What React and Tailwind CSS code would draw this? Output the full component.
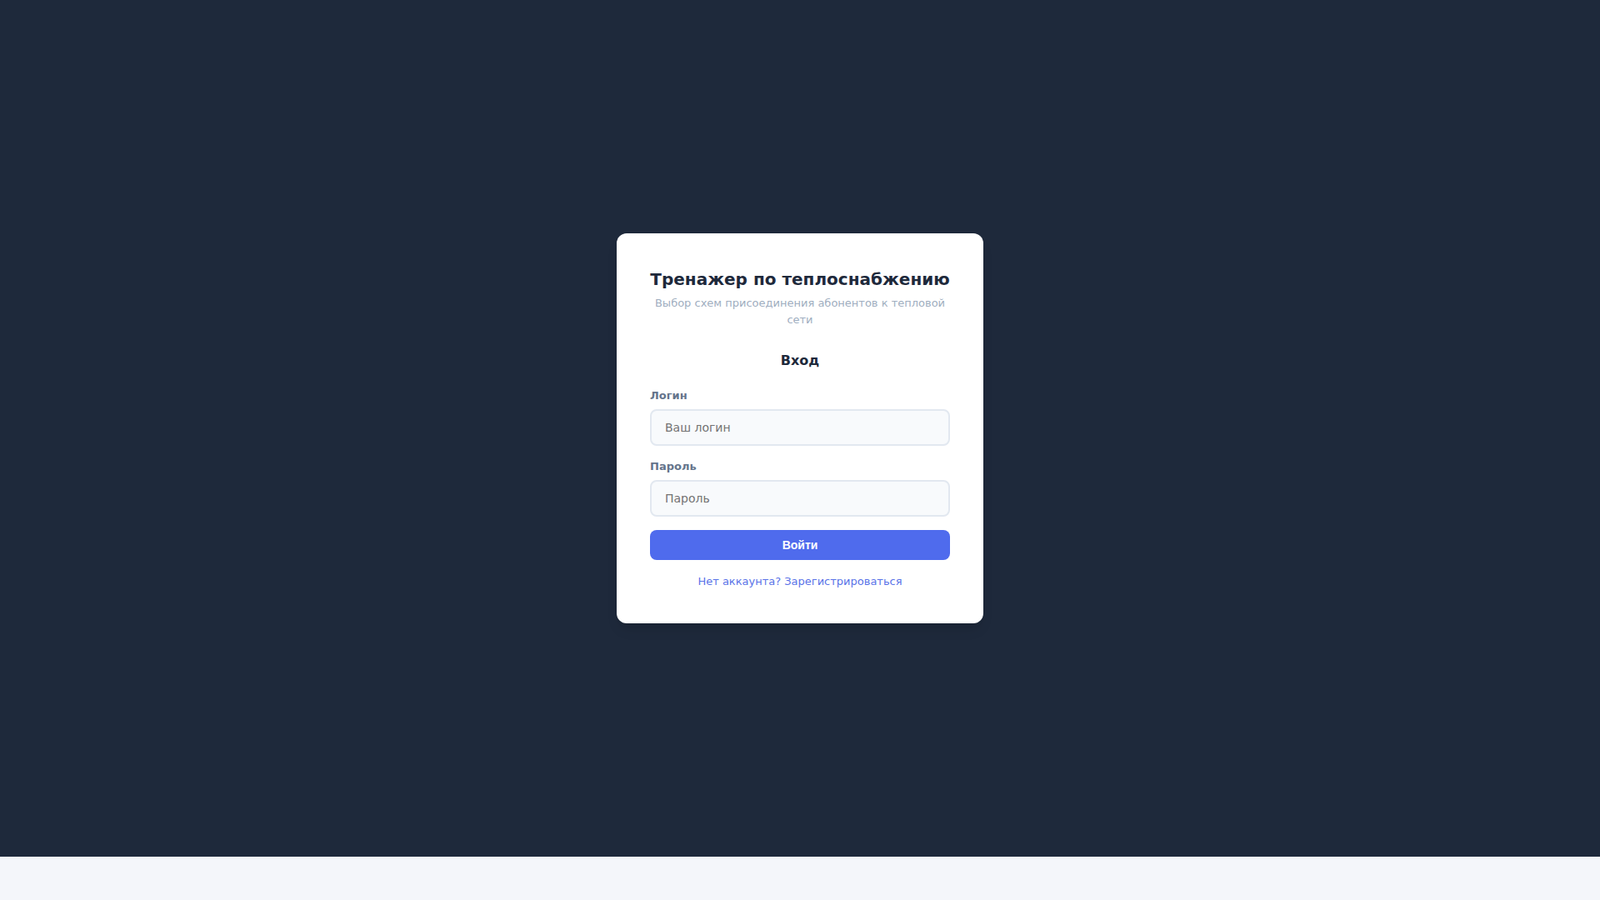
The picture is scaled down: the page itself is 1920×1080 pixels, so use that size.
export default function App() {
  const dv = { fontFamily: '"DejaVu Sans", sans-serif' };
  return (
    <div style={dv}>
      <div className="h-[1028px] bg-[#1e293b] flex items-center justify-center">
        <div className="w-[440px] bg-white rounded-xl shadow-lg px-10 pt-10 pb-10">
          <h1 className="text-[20px] leading-[30px] font-bold text-[#1e293b] text-center">Тренажер по теплоснабжению</h1>
          <p className="text-[13px] leading-[19.5px] text-[#a0aec0] text-center mt-[4px]">Выбор схем присоединения абонентов к тепловой сети</p>
          <h2 className="text-[16px] leading-[24px] font-bold text-[#1e293b] text-center mt-[28px]">Вход</h2>
          <form className="mt-[20px]" onSubmit={(e) => e.preventDefault()}>
            <label className="block text-[13px] leading-[20px] font-bold text-[#64748b] mb-[6px]">Логин</label>
            <input
              className="w-full h-[44px] rounded-lg border-2 border-[#e2e8f0] bg-[#f8fafc] px-4 text-[14px] text-[#1e293b] placeholder:text-[#737373] outline-none"
              style={dv}
              placeholder="Ваш логин"
            />
            <label className="block text-[13px] leading-[20px] font-bold text-[#64748b] mt-[15px] mb-[6px]">Пароль</label>
            <input
              type="password"
              className="w-full h-[44px] rounded-lg border-2 border-[#e2e8f0] bg-[#f8fafc] px-4 text-[14px] text-[#1e293b] placeholder:text-[#737373] outline-none"
              style={dv}
              placeholder="Пароль"
            />
            <button
              type="submit"
              className="w-full h-[36px] mt-[16px] rounded-lg bg-[#4f6bed] text-white text-[14px] font-bold"
              style={{ fontFamily: '"Liberation Sans", Arial, sans-serif' }}
            >
              Войти
            </button>
          </form>
          <p className="text-[13px] leading-[20px] text-center mt-[16px]">
            <a href="#" className="text-[#5a73e8]">Нет аккаунта? Зарегистрироваться</a>
          </p>
        </div>
      </div>
      <div className="h-[52px] bg-[#f4f6fa]"></div>
    </div>
  );
}
